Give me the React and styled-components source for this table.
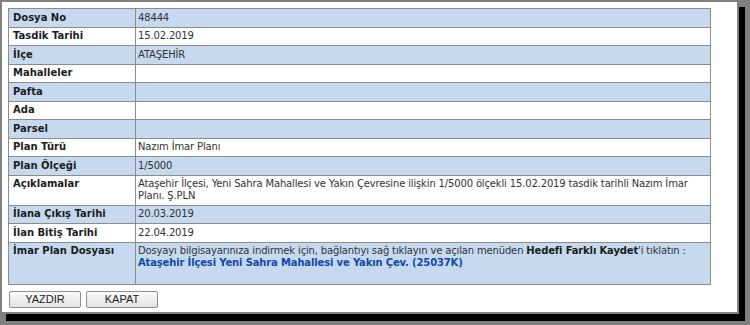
import React from "react";
import styled, { createGlobalStyle } from "styled-components";

const Global = createGlobalStyle`
  html, body { margin: 0; padding: 0; }
  body {
    background: #808080;
    font-family: "DejaVu Sans", Verdana, sans-serif;
    width: 750px;
    height: 325px;
    overflow: hidden;
  }
`;

const Panel = styled.div`
  box-sizing: border-box;
  width: 739px;
  height: 314px;
  border: 2px solid #808080;
  background: #fff;
  box-shadow: 6px 7px 0 #000;
  padding: 6px 0 0 6px;
  display: flex;
  flex-direction: column;
  gap: 6px;
`;

const Table = styled.table`
  width: 703px;
  border-collapse: collapse;
  border: 1px solid #7d7d7d;
  table-layout: fixed;
`;

const Row = styled.tr`
  height: 18.5px;
  background: ${(p) => (p.$blue ? "#c6d9ef" : "#ffffff")};
`;

const Label = styled.td`
  width: 118px;
  border: 1px solid #8c8c8c;
  padding: 2.5px 4px;
  font-size: 10px;
  line-height: 12px;
  font-weight: bold;
  color: #1c1c1c;
  vertical-align: top;
  white-space: nowrap;
`;

const Value = styled.td`
  border: 1px solid #8c8c8c;
  padding: 2.5px 2px 2.5px 2px;
  font-size: 10px;
  letter-spacing: -0.15px;
  line-height: 12px;
  color: #333;
  vertical-align: top;
`;

const Strong = styled.b`
  color: #1c1c1c;
`;

const Link = styled.a`
  color: #0f4aa3;
  font-weight: bold;
  text-decoration: none;
`;

const Buttons = styled.div`
  display: flex;
  gap: 5px;
  padding-left: 1px;
`;

const Button = styled.button`
  box-sizing: border-box;
  width: 72px;
  height: 17px;
  padding: 0;
  border: 1px solid #8f8f8f;
  border-radius: 2px;
  background: linear-gradient(#fafafa, #e4e4e4);
  font-family: "Liberation Sans", Arial, sans-serif;
  font-size: 11px;
  color: #222;
`;

const rows = [
  ["Dosya No", "48444"],
  ["Tasdik Tarihi", "15.02.2019"],
  ["İlçe", "ATAŞEHİR"],
  ["Mahalleler", ""],
  ["Pafta", ""],
  ["Ada", ""],
  ["Parsel", ""],
  ["Plan Türü", "Nazım İmar Planı"],
  ["Plan Ölçeği", "1/5000"],
  [
    "Açıklamalar",
    "Ataşehir İlçesi, Yeni Sahra Mahallesi ve Yakın Çevresine ilişkin 1/5000 ölçekli 15.02.2019 tasdik tarihli Nazım İmar Planı. Ş.PLN",
  ],
  ["İlana Çıkış Tarihi", "20.03.2019"],
  ["İlan Bitiş Tarihi", "22.04.2019"],
];

export default function App() {
  return (
    <>
      <Global />
      <Panel>
        <Table>
          <tbody>
            {rows.map(([k, v], i) => (
              <Row key={k} $blue={i % 2 === 0}>
                <Label>{k}</Label>
                <Value>{v}</Value>
              </Row>
            ))}
            <Row $blue>
              <Label>İmar Plan Dosyası</Label>
              <Value>
                Dosyayı bilgisayarınıza indirmek için, bağlantıyı sağ tıklayın ve
                açılan menüden <Strong>Hedefi Farklı Kaydet</Strong>'i tıklatın :
                <br />
                <Link href="#">
                  Ataşehir İlçesi Yeni Sahra Mahallesi ve Yakın Çev. (25037K)
                </Link>
                <br />
                &nbsp;
              </Value>
            </Row>
          </tbody>
        </Table>
        <Buttons>
          <Button>YAZDIR</Button>
          <Button>KAPAT</Button>
        </Buttons>
      </Panel>
    </>
  );
}
